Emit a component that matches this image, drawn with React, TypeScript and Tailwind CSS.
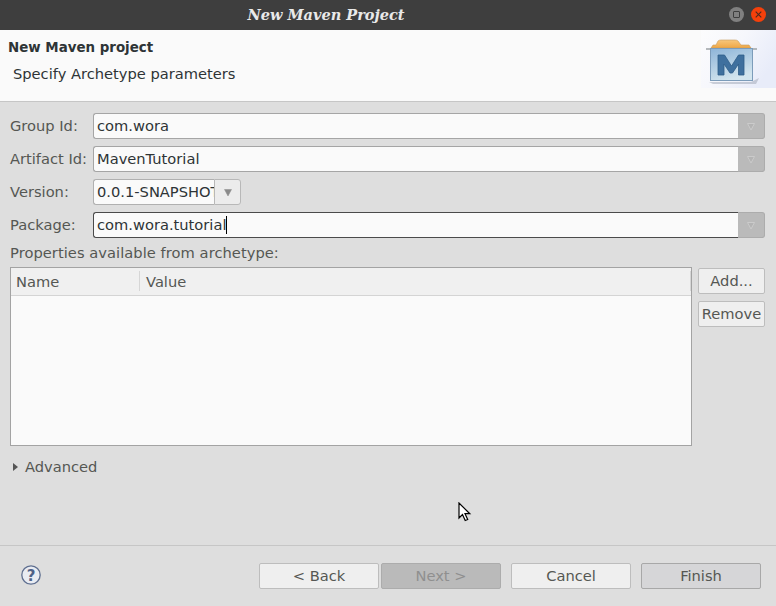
import React from "react";

const Arrow = ({ dark }: { dark?: boolean }) => (
  <svg width="10" height="9" viewBox="0 0 10 9">
    {dark ? (
      <path d="M1.5 1.5h7L5 8z" fill="#8a8a8a" stroke="#8a8a8a" strokeWidth="0.5" />
    ) : (
      <path d="M1.5 1.5h7L5 8z" fill="#b4b4b4" stroke="#cbcbcb" strokeWidth="1" />
    )}
  </svg>
);

const Combo = ({ value, focus }: { value: string; focus?: boolean }) => (
  <div className="flex h-[26px] flex-1">
    <div className={`flex flex-1 items-center rounded-l-[3px] border border-r-0 bg-[#fafafa] pl-[3px] text-[#2e3436] ${focus ? "border-[#4a4a4a]" : "border-[#a5a5a5]"}`}>
      {value}
      {focus && <span className="h-[18px] w-px bg-black" />}
    </div>
    <div className="flex w-[27px] items-center justify-center rounded-r-[3px] border border-l-0 border-[#acacac] bg-[#bababa]">
      <Arrow />
    </div>
  </div>
);

const Row = ({ label, children }: { label: string; children: React.ReactNode }) => (
  <div className="flex h-[26px] items-center">
    <div className="w-[83px] shrink-0 text-[#555753]">{label}</div>
    {children}
  </div>
);

const Btn = ({ children, cls }: { children: React.ReactNode; cls: string }) => (
  <div className={`flex h-[26px] w-[120px] items-center justify-center rounded-[2px] border ${cls}`}>{children}</div>
);

const Logo = () => (
  <svg width="75" height="58" viewBox="0 0 75 58">
    <defs>
      <linearGradient id="bgl" x1="0" y1="0" x2="1" y2="0.5">
        <stop offset="0" stopColor="#fcfcfd" />
        <stop offset="0.5" stopColor="#f6f7fc" />
        <stop offset="1" stopColor="#e8ecf9" />
      </linearGradient>
      <linearGradient id="box" x1="0" y1="0" x2="0.4" y2="1">
        <stop offset="0" stopColor="#8db4d8" />
        <stop offset="1" stopColor="#d3e5ee" />
      </linearGradient>
      <linearGradient id="lid" x1="0" y1="0" x2="0" y2="1">
        <stop offset="0" stopColor="#f8c77c" />
        <stop offset="1" stopColor="#eea645" />
      </linearGradient>
    </defs>
    <rect width="75" height="58" fill="url(#bgl)" />
    <path d="M8 52h42l8-4-3 6H12z" fill="#a4acba" opacity="0.55" />
    <path d="M10 18l2-3h3l2-4q1-1 3-1h14q2 0 3 1l3 4h8l2 3z" fill="url(#lid)" stroke="#c79b5c" strokeWidth="0.6" />
    <rect x="5" y="18" width="5" height="2" fill="#b4b8bb" />
    <rect x="51" y="18" width="5" height="2" fill="#b4b8bb" />
    <rect x="9.5" y="18.5" width="42" height="32" fill="url(#box)" stroke="#7c9cba" />
    <path d="M17 45V25h6.500L30.500 36 37.500 25H43v20h-5.500V34l-6 9h-2.500l-6-9v11z" fill="#3f709e" stroke="#2f5d88" strokeWidth="0.8" />
  </svg>
);

export default function App() {
  return (
    <div className="flex h-[606px] w-[776px] flex-col overflow-hidden bg-[#dedede] font-['DejaVu_Sans',sans-serif] text-[14.67px] leading-none">
      <div className="relative flex h-[30px] shrink-0 items-center justify-center bg-[#3e3e3e] pr-[124px]">
        <span className="font-['DejaVu_Serif',serif] text-[14.5px] font-bold italic text-[#e9e9e9]">New Maven Project</span>
        <div className="absolute right-[10px] top-[7px] flex gap-[7px]">
          <div className="flex h-[15px] w-[15px] items-center justify-center rounded-full bg-[#808080]">
            <div className="h-[7px] w-[7px] rounded-[1px] border border-[#3e3e3e]" />
          </div>
          <div className="flex h-[15px] w-[15px] items-center justify-center rounded-full bg-[#f4400b]">
            <svg width="7" height="7" viewBox="0 0 7 7"><path d="M.7.7l5.6 5.6M6.3.7L.7 6.3" stroke="#4a2a20" strokeWidth="1.1" /></svg>
          </div>
        </div>
      </div>
      <div className="flex h-[72px] shrink-0 justify-between border-b border-[#c6c6c6] bg-[#fafafa] text-[#2e3436]">
        <div className="pl-2 pt-[10px]">
          <div className="text-[13.4px] font-bold leading-[15px]">New Maven project</div>
          <div className="pl-[5px] pt-[12px]">Specify Archetype parameters</div>
        </div>
        <div className="h-[58px] w-[75px] shrink-0"><Logo /></div>
      </div>
      <div className="flex flex-1 flex-col pl-[10px] pr-[11px] pt-[11px]">
        <div className="flex flex-col gap-[7px]">
          <Row label="Group Id:"><Combo value="com.wora" /></Row>
          <Row label="Artifact Id:"><Combo value="MavenTutorial" /></Row>
          <Row label="Version:">
            <div className="flex h-[26px] w-[148px]">
              <div className="flex w-[121px] items-center overflow-hidden whitespace-nowrap rounded-l-[3px] border border-r-0 border-[#b0b0b0] bg-[#fafafa] pl-[3px] text-[#2e3436]">0.0.1-SNAPSHOT</div>
              <div className="flex w-[27px] items-center justify-center rounded-r-[3px] border border-[#b8b8b8] bg-[#ececec]"><Arrow dark /></div>
            </div>
          </Row>
          <Row label="Package:"><Combo value="com.wora.tutorial" focus /></Row>
        </div>
        <div className="pt-[8px] tracking-[0.05px] text-[#555753]">Properties available from archetype:</div>
        <div className="mt-[6px] flex gap-[6px]">
          <div className="flex h-[179px] flex-1 flex-col border border-[#a3a3a3] bg-[#fafafa]">
            <div className="flex h-[28px] shrink-0 items-center border-b border-[#d4d4d4] bg-[#f0f0f0] text-[#555753]">
              <div className="flex h-[20px] w-[129px] items-center border-r border-[#d6d6d6] pl-[5px] pt-[2px]">Name</div>
              <div className="flex-1 pl-[6px] pt-[2px]">Value</div>
              <div className="h-[20px] w-px bg-[#d6d6d6]" />
            </div>
          </div>
          <div className="flex w-[67px] flex-col gap-[7px] pt-px text-[#555753]">
            <div className="flex h-[26px] items-center justify-center rounded-[2px] border border-[#bdbdbd] bg-[#efefef] pt-px">Add...</div>
            <div className="flex h-[26px] items-center justify-center rounded-[2px] border border-[#bdbdbd] bg-[#efefef] pt-px">Remove</div>
          </div>
        </div>
        <div className="flex items-center pt-[14px] text-[#555753]">
          <svg className="ml-[3px]" width="5" height="8" viewBox="0 0 5 8"><path d="M0 0l5 4-5 4z" fill="#555" /></svg>
          <span className="pl-[7px]">Advanced</span>
        </div>
      </div>
      <div className="flex h-[61px] shrink-0 items-center border-t border-[#c6c6c6] pl-[21px] pr-[15px]">
        <svg className="mb-[2px]" width="20" height="20" viewBox="0 0 20 20">
          <circle cx="10" cy="10" r="9.200" fill="#e9ecf2" stroke="#5f6f90" strokeWidth="1.300" />
          <text x="10" y="15.500" textAnchor="middle" fontSize="15" fontWeight="700" fontFamily="DejaVu Sans" fill="#4f6288">?</text>
        </svg>
        <div className="ml-auto flex text-[#555753]">
          <Btn cls="border-[#bdbdbd] bg-[#efefef]">&lt; Back</Btn>
          <Btn cls="ml-[2px] border-[#acacac] bg-[#bababa] text-[#8f8f8f]">Next &gt;</Btn>
          <Btn cls="ml-[10px] border-[#bdbdbd] bg-[#efefef]">Cancel</Btn>
          <Btn cls="ml-[10px] border-[#a8a8a8] bg-[#d6d6d8]">Finish</Btn>
        </div>
      </div>
      <svg className="absolute left-[458px] top-[502px]" width="14" height="21" viewBox="0 0 14 21">
        <path d="M1 1v15l3.500-3.500 2.700 6 2.500-1.100-2.700-5.700h4.800z" fill="#fff" stroke="#000" strokeWidth="1.200" />
      </svg>
    </div>
  );
}
